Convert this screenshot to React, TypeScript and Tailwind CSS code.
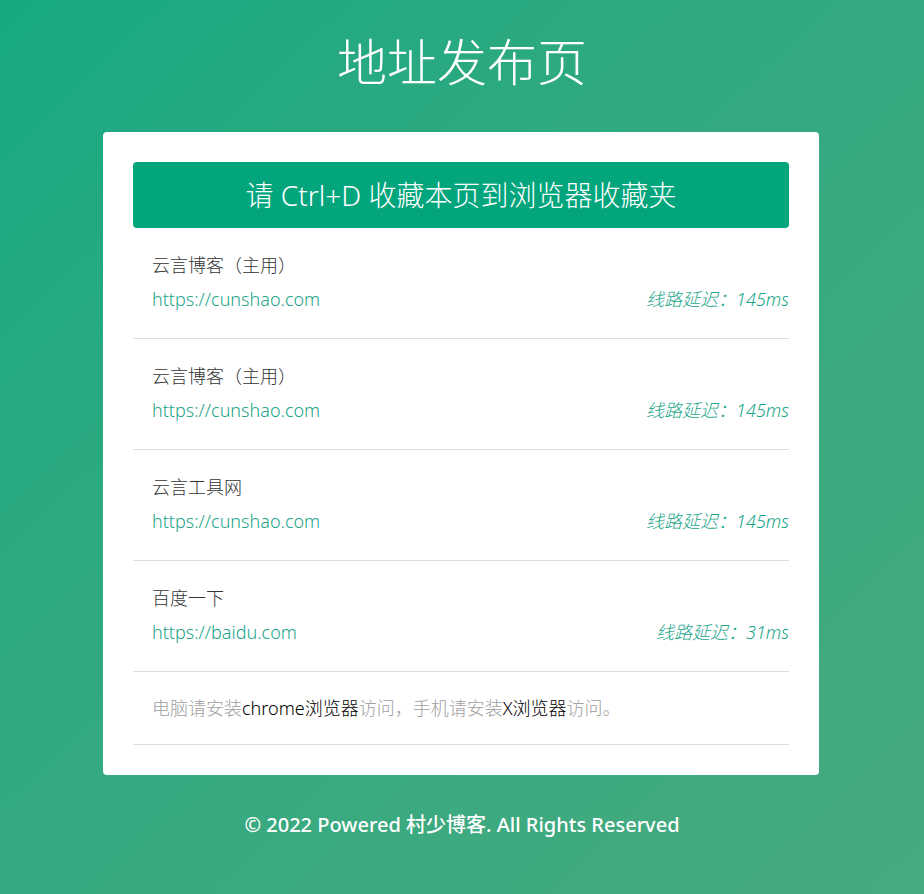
import React from "react"

const links = [
  { name: "云言博客（主用）", url: "https://cunshao.com", delay: "145ms" },
  { name: "云言博客（主用）", url: "https://cunshao.com", delay: "145ms" },
  { name: "云言工具网", url: "https://cunshao.com", delay: "145ms" },
  { name: "百度一下", url: "https://baidu.com", delay: "31ms" },
]

export default function App() {
  return (
    <div
      className="min-h-screen bg-gradient-to-br from-[#15a982] to-[#47aa7e] pb-[40px] font-light"
      style={{ fontFamily: '"Noto Sans", "Noto Sans CJK SC", sans-serif' }}
    >
      {/* Title */}
      <h1 className="pt-[31px] text-center text-[50px] leading-[62px] font-light text-white">地址发布页</h1>

      {/* Card */}
      <div className="mx-auto mt-[39px] w-[716px] -translate-x-px rounded bg-white px-[30px] pt-[30px] pb-[30px]">
        <div className="flex h-[66px] items-center justify-center rounded bg-[#03a57d] text-[28px] font-light text-white">
          请 Ctrl+D 收藏本页到浏览器收藏夹
        </div>

        {links.map((l, i) => (
          <div key={i} className="border-b border-[#dddddd] pt-[24px] pb-[26px] pl-[19px]">
            <div className="text-[18px] leading-[26px] text-[#333333]">{l.name}</div>
            <div className="mt-[8px] flex items-center justify-between text-[18px] leading-[26px]">
              <a className="text-[#22a58a]">{l.url}</a>
              <span className="italic text-[#1ba68a]">线路延迟：{l.delay}</span>
            </div>
          </div>
        ))}

        <div className="border-b border-[#dddddd] py-[23px] pl-[19px] text-[18px] leading-[26px] text-[#a0a0a0]">
          电脑请安装<span className="text-black">chrome浏览器</span>访问，手机请安装
          <span className="text-black">X浏览器</span>访问。
        </div>
      </div>

      {/* Footer */}
      <p className="mt-[36px] text-center text-[20px] leading-[28px] font-medium text-white">
        © 2022 Powered 村少博客. All Rights Reserved
      </p>
    </div>
  )
}
